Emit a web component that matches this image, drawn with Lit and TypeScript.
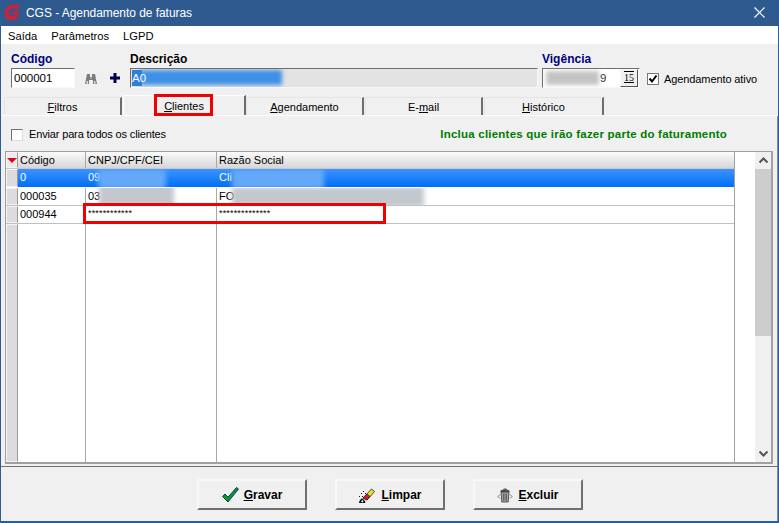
import { LitElement, html, css, svg } from "lit";
import { customElement } from "lit/decorators.js";

const logo = svg`<svg width="17" height="17" viewBox="0 0 16 16"><path d="M15 2.500C13.500 1 11.500.5 9.500.5 4.500.5.500 4 .5 9c0 4 2.800 6.500 6.500 6.500 2.500 0 4.500-1 6-2.500l1.200-6H8L7.300 9.800h3.300l-.3 1C9.700 11.300 8.800 11.600 7.800 11.600 5.800 11.600 4.500 10.300 4.500 8.500c0-2.500 2.200-4.200 4.700-4.200 1.300 0 2.500.4 3.300 1.200z" fill="#c9233c"/></svg>`;
const binoculars = svg`<svg width="14" height="12" viewBox="0 0 14 12"><g fill="#7d7d7d"><path d="M3 1h3v3h2V1h3l2 10H9V7H5v4H1z"/></g><g fill="#d4d4d4"><rect x="2.500" y="8" width="1.500" height="3"/><rect x="10" y="8" width="1.500" height="3"/><rect x="6.500" y="4.500" width="1" height="1.500"/></g></svg>`;
const plus = svg`<svg width="10" height="10" viewBox="0 0 10 10"><path d="M3.500 0h3v3.500H10v3H6.500V10h-3V6.500H0v-3h3.500z" fill="#000050"/></svg>`;
const check = svg`<svg width="17" height="16" viewBox="0 0 17 16"><path d="M0.500 9.500L3 7l3 3.200L14.500 .5l2 1.500L6 15z" fill="#0a9a1e" stroke="#003c70" stroke-width="1"/></svg>`;
const eraser = svg`<svg width="18" height="18" viewBox="0 0 18 18"><path d="M5 12L13.500 3l3 2.500L9 14z" fill="#f0e020" stroke="#222" stroke-width=".8"/><path d="M5 12l4-4 3 2.500L9 14z" fill="#e0142c" stroke="#222" stroke-width=".8"/><path d="M1 17c0-2 1-3 2-4s2 0 3 1 2 2 1 3zM3 7h1v1H3zM5 5h1v1H5zM1 10h1v1H1zM7 7h1v1H7zM4 10h1v1H4z" fill="#111"/><path d="M3 15.500c.5-1 1-1.500 1.500-1.500l1 1.500-1 1z" fill="#eee"/></svg>`;
const trash = svg`<svg width="16" height="16" viewBox="0 0 16 16"><path d="M6 2.500C6.500 1 9.500 1 10 2.500L12.500 3.500V5h-9V3.500z" fill="#555"/><path d="M4 5h8l-.8 10H4.800z" fill="#a8a8a8" stroke="#222" stroke-width=".7"/><path d="M6.500 6.500v7M8 6.500v7M9.500 6.500v7" stroke="#333" stroke-width=".6"/><path d="M3 7.500L1 9.500l2 2M13 7.500l2 2-2 2" fill="none" stroke="#444" stroke-width=".7"/></svg>`;

@customElement("app-root")
export class AppRoot extends LitElement {
  static styles = css`
    :host {
      display: flex; flex-direction: column; box-sizing: border-box;
      width: 779px; height: 523px; overflow: hidden;
      background: #f0f0f0; border: solid #2f5c92; border-width: 0 1px 2px 1px;
      font: 11px "Liberation Sans", Arial, sans-serif; color: #000;
    }
    .title { height: 26px; flex: none; background: #2e5a8f; color: #fff; display: flex; align-items: center; margin: 0 -1px; padding: 0 14px 1px 4px; box-sizing: border-box; font-size: 12px; letter-spacing: -.05px; }
    .title .logo { width: 17px; height: 17px; margin-right: 5px; }
    .title .name { flex: 1; }
    .close { width: 11px; height: 11px; }
    .menu { height: 18px; flex: none; box-sizing: border-box; padding: 1px 0 0 7px; background: #fff; display: flex; gap: 14px; align-items: center; font-size: 11.200px; }
    .head { height: 53px; flex: none; display: flex; padding: 8px 0 0 10px; box-sizing: border-box; position: relative; }
    .lab { font-size: 12px; font-weight: bold; line-height: 14px; height: 16px; }
    .navy { color: #000080; }
    .inset { height: 20px; box-sizing: border-box; border: 1px solid; border-color: #6e6e6e #f8f8f8 #f8f8f8 #6e6e6e; background: #fff; line-height: 18px; padding-left: 2px; font-size: 11.500px; position: relative; overflow: hidden; }
    .cod { width: 64px; }
    .cod .inset { width: 64px; }
    .bin { width: 14px; margin: 21px 0 0 9px; }
    .plus { width: 10px; margin: 21px 0 0 12px; }
    .desc { width: 408px; margin-left: 10px; }
    .desc .inset { background: #e3e3e3; color: #fff; padding-left: 1px; }
    .sel { position: absolute; left: 1px; top: 1px; width: 10px; height: 16px; background: #2b7fd8; }
    .sel2 { position: absolute; left: 9px; top: 1px; width: 142px; height: 15px; background: #3d90e6; filter: blur(2px); }
    .seltxt { position: relative; }
    .vig { width: 98px; margin-left: 4px; }
    .vig .inset { display: flex; justify-content: space-between; padding: 0; }
    .vig .date { flex: 1; position: relative; line-height: 18px; color: #333; padding-left: 57px; }
    .vig .mask { position: absolute; left: 3px; top: 2px; width: 53px; height: 14px; background: #c4c4c4; filter: blur(2px); }
    .cal { width: 18px; margin-right: 1px; box-sizing: border-box; height: 18px; border: 1px solid; border-color: #f8f8f8 #555 #555 #f8f8f8; background: #f0f0f0; font: 10px/15px "Liberation Serif", serif; text-align: center; text-decoration: underline overline; }
    .cb { width: 12px; height: 12px; box-sizing: border-box; border: 1px solid #6e6e6e; background: #fff; border-right-color: #ddd; border-bottom-color: #ddd; display: block; margin-top: 1px; }
    .ativo { display: flex; align-items: center; gap: 5px; margin: 17px 0 0 7px; height: 20px; white-space: nowrap; font-size: 11px; letter-spacing: -.1px; }
    .tabs { height: 20px; flex: none; display: flex; padding-left: 3px; align-items: flex-end; border-bottom: 1px solid #fff; box-sizing: border-box; margin-top: -1px; }
    .tab { box-sizing: border-box; height: 18px; border: 1px solid #e4e4e4; border-bottom: none; border-right: 2px solid #6d6d6d; text-align: center; line-height: 18px; font-size: 11px; margin-right: 1px; }
    .tab.act { height: 20px; border-color: #fff; border-right-color: #6d6d6d; position: relative; line-height: 20px; margin-right: 0; background: #f0f0f0; }
    .redbox { position: absolute; left: 30px; top: -2px; width: 59px; height: 22px; box-sizing: border-box; border: 3px solid #f00000; }
    .page { flex: 1; display: flex; flex-direction: column; padding: 11px 4px 0 4px; border-right: 1px solid #888; min-height: 0; }
    .bar { flex: none; display: flex; align-items: center; box-sizing: border-box; height: 24px; padding: 0 2px 10px 6px; }
    .bar .e { margin-left: 6px; font-size: 11px; letter-spacing: -.15px; white-space: nowrap; }
    .bar .green { margin-left: auto; margin-right: 44px; color: #007c00; font-weight: bold; font-size: 11.500px; letter-spacing: .22px; }
    .grid { height: 313px; flex: none; box-sizing: border-box; border: 1px solid #a0a0a0; border-bottom-width: 2px; border-right-width: 2px; background: #fff; display: flex; position: relative; }
    .tbl { width: 728px; flex: none; display: flex; flex-direction: column; border-right: 1px solid #a0a0a0; }
    .row { display: grid; grid-template-columns: 12px 68px 131px 1fr; height: 18px; flex: none; box-sizing: border-box; border-bottom: 1px solid #c0c0c0; }
    .row > div { box-sizing: border-box; border-right: 1px solid #a8a8a8; padding-left: 2px; line-height: 17px; position: relative; overflow: hidden; white-space: nowrap; font-size: 11px; }
    .row > div:last-child { border-right: none; }
    .row > .rh { background: #dcdcdc; border: 1px solid; border-color: #f4f4f4 #999 #f4f4f4 #f4f4f4; padding: 0; }
    .row.hd { height: 17px; background: linear-gradient(#fbfbfb, #d6d6d6); border-bottom: 1px solid #c8c8c8; }
    .row.hd > div { line-height: 16px; }
    .row.hd > .rh { background: #ececec; }
    .tri { display: block; width: 0; height: 0; margin: 5px 0 0 0; border: 5px solid transparent; border-top: 5px solid #e4001c; border-bottom: none; }
    .row.s { height: 19px; background: linear-gradient(#3d93ff, #006ff5); color: #fff; border-bottom-color: #fff; }
    .row.s > div { border-right-color: transparent; }
    .row.s > .rh { border-right-color: #999; background: #dcdcdc; }
    .row.fill { flex: 1; border-bottom: none; }
    .row.fill > .rh { border-bottom-color: #f4f4f4; }
    .row > .star { font-size: 9px; line-height: 15px; letter-spacing: .17px; }
    .blur { position: absolute; top: 0; bottom: -2px; filter: blur(2.500px); }
    .bw { background: #c3c7ce; }
    .bb { background: #64a8fb; }
    .overlay { position: absolute; left: 77px; top: 51px; width: 303px; height: 21px; box-sizing: border-box; border: 3px solid #f00000; pointer-events: none; }
    .sb { flex: 1; display: flex; justify-content: flex-end; }
    .track { width: 16px; background: #f0f0f0; display: flex; flex-direction: column; }
    .arrow { height: 17px; display: flex; align-items: center; justify-content: center; flex: none; }
    .thumb { height: 167px; background: #cdcdcd; flex: none; }
    .rest { flex: 1; }
    .bottom { flex: none; border-top: 1px solid #707070; margin: 2px -5px 0 -4px; }
    .foot { height: 54px; flex: none; box-sizing: border-box; display: flex; justify-content: flex-start; gap: 28px; padding: 12px 0 0 196px; margin: 0 -4px; }
    .btn { width: 110px; height: 31px; box-sizing: border-box; border: 2px solid; border-color: #f8f8f8 #707070 #707070 #f8f8f8; display: flex; align-items: center; justify-content: center; gap: 5px; font-weight: bold; font-size: 12px; }
    .btn svg { display: block; }
  `;

  render() {
    return html`
      <div class="title">
        <div class="logo">${logo}</div>
        <div class="name">CGS - Agendamento de faturas</div>
        <svg class="close" viewBox="0 0 11 11"><path d="M.5.5l10 10M10.500.5l-10 10" stroke="#fff" stroke-width="1.200"/></svg>
      </div>
      <div class="menu"><span>Saída</span><span>Parâmetros</span><span>LGPD</span></div>
      <div class="head">
        <div class="cod"><div class="lab navy">Código</div><div class="inset">000001</div></div>
        <div class="bin">${binoculars}</div>
        <div class="plus">${plus}</div>
        <div class="desc"><div class="lab">Descrição</div>
          <div class="inset"><span class="sel2"></span><span class="sel"></span><span class="seltxt">A0</span></div></div>
        <div class="vig"><div class="lab navy">Vigência</div>
          <div class="inset"><div class="date"><span class="mask"></span>9</div><div class="cal">15</div></div></div>
        <div class="ativo">
          <svg width="12" height="12" viewBox="0 0 12 12"><rect x=".5" y=".5" width="11" height="11" fill="#fff" stroke="#777"/><path d="M2.500 5.500l2.500 3 4.500-6" fill="none" stroke="#000" stroke-width="2"/></svg>
          <span>Agendamento ativo</span>
        </div>
      </div>
      <div class="tabs">
        <div class="tab" style="width:118px"><u>F</u>iltros</div>
        <div class="tab act" style="width:123px"><u>C</u>lientes<span class="redbox"></span></div>
        <div class="tab" style="width:118px"><u>A</u>gendamento</div>
        <div class="tab" style="width:118px">E-<u>m</u>ail</div>
        <div class="tab" style="width:120px"><u>H</u>istórico</div>
      </div>
      <div class="page">
        <div class="bar">
          <span class="cb"></span><span class="e">Enviar para todos os clientes</span>
          <span class="green">Inclua clientes que irão fazer parte do faturamento</span>
        </div>
        <div class="grid">
          <div class="tbl">
            <div class="row hd"><div class="rh"><span class="tri"></span></div><div>Código</div><div>CNPJ/CPF/CEI</div><div>Razão Social</div></div>
            <div class="row s"><div class="rh"></div><div>0</div>
              <div>09<span class="blur bb" style="left:12px;width:68px"></span></div>
              <div>Cli<span class="blur bb" style="left:15px;width:92px"></span></div></div>
            <div class="row"><div class="rh"></div><div>000035</div>
              <div>03<span class="blur bw" style="left:13px;width:75px;top:-4px"></span></div>
              <div>FO<span class="blur bw" style="left:15px;width:192px;top:-1px"></span></div></div>
            <div class="row"><div class="rh"></div><div>000944</div>
              <div class="star">************</div><div class="star">**************</div></div>
            <div class="row fill"><div class="rh"></div><div></div><div></div><div></div></div>
          </div>
          <div class="sb"><div class="track">
            <div class="arrow"><svg width="9" height="7" viewBox="0 0 9 7"><path d="M.5 5.500L4.500 1.500l4 4" fill="none" stroke="#555" stroke-width="2"/></svg></div>
            <div class="thumb"></div>
            <div class="rest"></div>
            <div class="arrow"><svg width="9" height="7" viewBox="0 0 9 7"><path d="M.5 1.500l4 4 4-4" fill="none" stroke="#555" stroke-width="2"/></svg></div>
          </div></div>
          <div class="overlay"></div>
        </div>
        <div class="bottom"></div>
        <div class="foot">
          <div class="btn">${check}<span><u>G</u>ravar</span></div>
          <div class="btn">${eraser}<span><u>L</u>impar</span></div>
          <div class="btn">${trash}<span><u>E</u>xcluir</span></div>
        </div>
      </div>
    `;
  }
}
